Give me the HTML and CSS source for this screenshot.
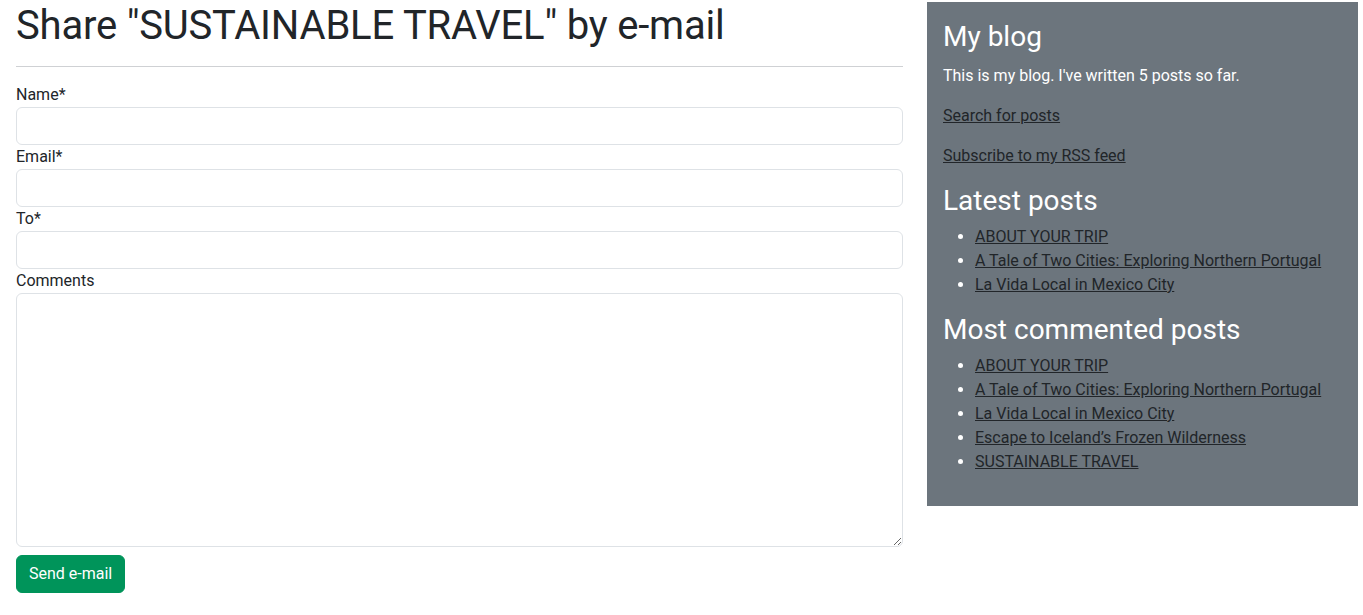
FILE: index.html
```html
<!DOCTYPE html>
<html lang="en">
<head>
<meta charset="utf-8">
<title>Share SUSTAINABLE TRAVEL</title>
<link rel="stylesheet" href="styles.css">
</head>
<body>
<div class="page">
  <main class="content">
    <h1 class="title">Share "SUSTAINABLE TRAVEL" by e-mail</h1>
    <hr class="rule">
    <form class="share-form">
      <label class="field-label" for="name">Name*</label>
      <input class="field" id="name" type="text">
      <label class="field-label" for="email">Email*</label>
      <input class="field" id="email" type="text">
      <label class="field-label" for="to">To*</label>
      <input class="field" id="to" type="text">
      <label class="field-label" for="comments">Comments</label>
      <textarea class="field area" id="comments" rows="10"></textarea>
      <div class="actions"><button class="btn-send" type="button">Send e-mail</button></div>
    </form>
  </main>
  <aside class="sidebar">
    <h2 class="side-title first">My blog</h2>
    <p class="side-p">This is my blog. I've written 5 posts so far.</p>
    <p class="side-p"><a href="#" class="side-link">Search for posts</a></p>
    <p class="side-p"><a href="#" class="side-link">Subscribe to my RSS feed</a></p>
    <h3 class="side-title">Latest posts</h3>
    <ul class="side-list">
      <li><a href="#" class="side-link">ABOUT YOUR TRIP</a></li>
      <li><a href="#" class="side-link">A Tale of Two Cities: Exploring Northern Portugal</a></li>
      <li><a href="#" class="side-link">La Vida Local in Mexico City</a></li>
    </ul>
    <h3 class="side-title">Most commented posts</h3>
    <ul class="side-list">
      <li><a href="#" class="side-link">ABOUT YOUR TRIP</a></li>
      <li><a href="#" class="side-link">A Tale of Two Cities: Exploring Northern Portugal</a></li>
      <li><a href="#" class="side-link">La Vida Local in Mexico City</a></li>
      <li><a href="#" class="side-link">Escape to Iceland’s Frozen Wilderness</a></li>
      <li><a href="#" class="side-link">SUSTAINABLE TRAVEL</a></li>
    </ul>
  </aside>
</div>
</body>
</html>
```

FILE: styles.css
```css
* { box-sizing: border-box; }
html, body { margin: 0; padding: 0; background: #fff; }
body {
  font-family: Roboto, "Liberation Sans", sans-serif;
  font-size: 16px;
  line-height: 1.5;
  color: #212529;
}
.page {
  display: flex;
  align-items: flex-start;
  gap: 24px;
  padding-left: 16px;
}
.content {
  width: 887px;
  flex: none;
}
.title {
  margin: 2px 0 0;
  font-size: 40px;
  font-weight: 400;
  line-height: 48px;
  letter-spacing: -0.2px;
}
.rule {
  margin: 16px 0 16px;
  border: 0;
  border-top: 1px solid #cfd1d4;
  height: 0;
}
.share-form { display: flex; flex-direction: column; }
.field-label { display: block; }
.field {
  display: block;
  width: 100%;
  height: 38px;
  padding: 6px 12px;
  font: inherit;
  color: #212529;
  background: #fff;
  border: 1px solid #dee2e6;
  border-radius: 6px;
}
.area {
  height: 254px;
  resize: vertical;
}
.actions { margin-top: 8px; }
.btn-send {
  font: inherit;
  color: #fff;
  background: #00945a;
  border: 1px solid #00945a;
  border-radius: 6px;
  padding: 6px 12px;
  line-height: 1.5;
}
.sidebar {
  margin-top: 2px;
  width: 431px;
  flex: none;
  background: #6c757d;
  color: #fff;
  padding: 18px 16px 16px;
}
.side-title {
  margin: 0 0 8px;
  font-size: 28px;
  font-weight: 400;
  line-height: 33px;
}
.side-title.first { margin-bottom: 11px; }
.side-p { margin: 0 0 16px; }
.side-link { color: #212529; text-decoration: underline; }
.side-list { margin: 0 0 16px; padding-left: 32px; }
```
